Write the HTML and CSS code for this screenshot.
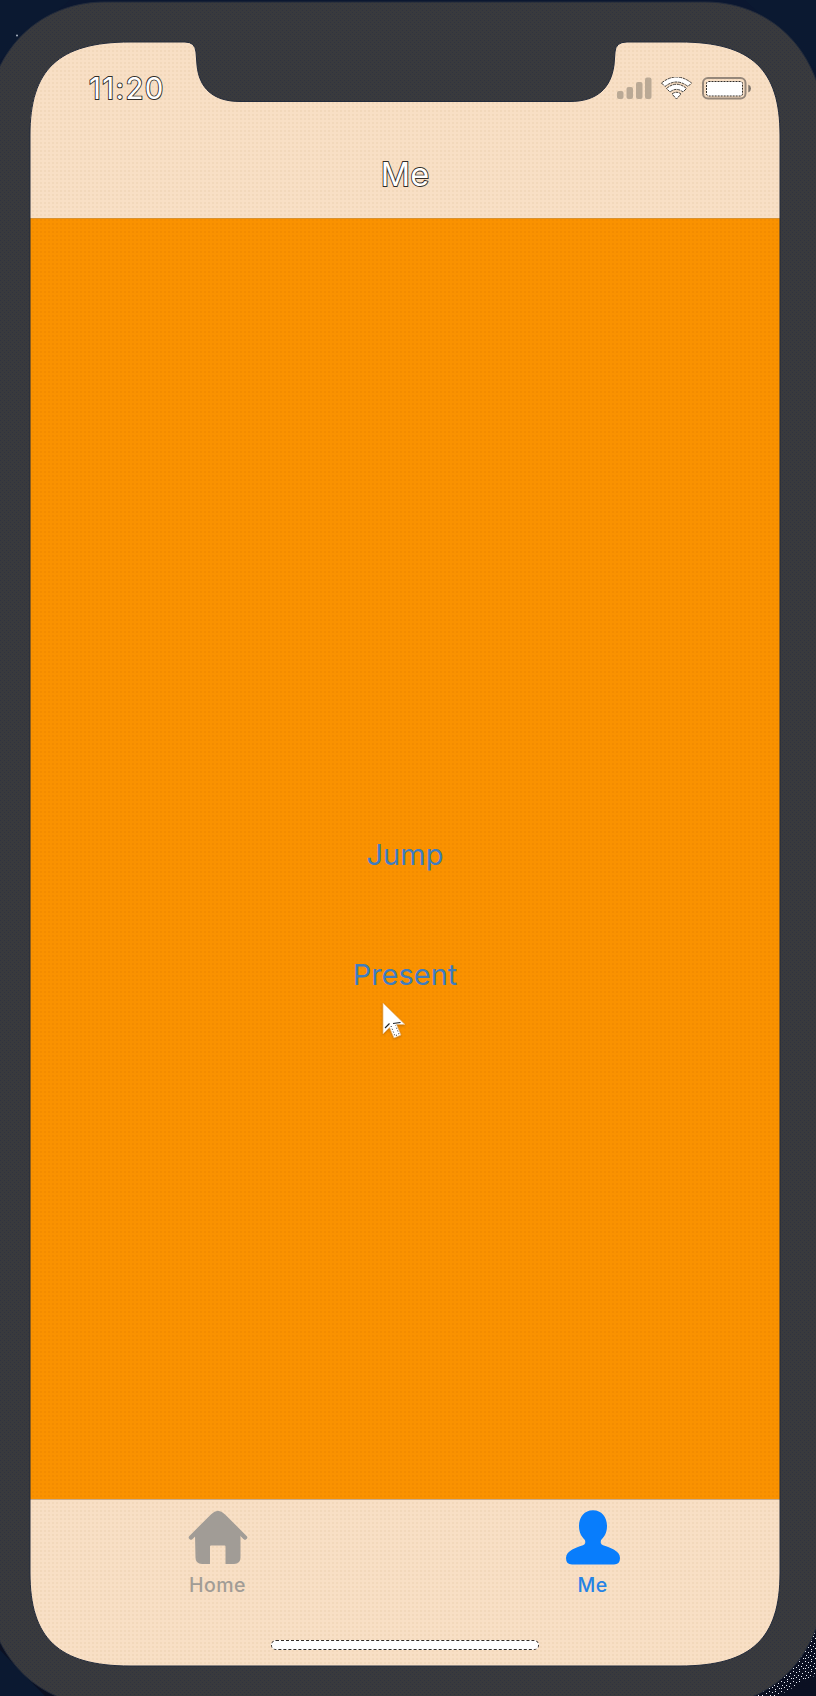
FILE: index.html
```
<!DOCTYPE html>
<html lang="en">
<head>
<meta charset="utf-8">
<title>Me</title>
<link rel="stylesheet" href="styles.css">
</head>
<body>
<main class="device">
  <div class="screen">
    <header class="top">
      <div class="status">
        <span class="time outlined">11:20</span>
        <svg class="indicators" width="134" height="24" viewBox="0 0 134 24">
          <g fill="#baa995">
            <rect x="0" y="14" width="6.5" height="8" rx="2"/>
            <rect x="9.5" y="10" width="6.5" height="12" rx="2"/>
            <rect x="19" y="5" width="6.5" height="17" rx="2"/>
            <rect x="28" y="0.5" width="6.5" height="21.5" rx="2"/>
          </g>
          <g fill="#fff" stroke="#302c28" stroke-width=".9" stroke-dasharray="3 .8" stroke-linejoin="round">
            <path d="M44.500 6Q59.500-6 74.500 6L71 9.500Q59.500 .5 48 9.500Z"/>
            <path d="M49.500 11.500Q59.500 3 69.500 11.500L66 15Q59.500 9.800 53 15Z"/>
            <path d="M55 17Q59.500 13.500 64 17L59.500 22Z"/>
          </g>
          <rect x="86" y="1" width="42.500" height="20.500" rx="5" fill="none" stroke="#95877a" stroke-width="2"/>
          <rect x="89.500" y="4.500" width="36" height="14.500" rx="2" fill="#fff" stroke="#302c28" stroke-dasharray="2 1"/>
          <path d="M131.300 7.500Q134 8.500 134 11.500T131.300 15.500Z" fill="#7d746b"/>
        </svg>
      </div>
      <h1 class="title"><span class="outlined">Me</span></h1>
    </header>
    <section class="content">
      <button class="action">Jump</button>
      <button class="action present">Present</button>
    </section>
    <nav class="tabs">
      <a class="tab">
        <svg width="60" height="54" viewBox="0 0 60 54">
          <path d="M3 27L24.500 5.500Q30 0 35.500 5.500L57 27" fill="none" stroke="#a19c96" stroke-width="4.500" stroke-linecap="round"/>
          <path d="M7 24L26 4Q30 1 34 4L52.500 24V47Q52.500 53.500 46 53.500H37.500V36Q37.500 35 36.500 35H23Q22 35 22 36V53.500H14Q7.500 53.500 7.500 47Z" fill="#a19c96"/>
        </svg>
        <span>Home</span>
      </a>
      <a class="tab active">
        <svg width="56" height="55" viewBox="0 0 56 55">
          <path d="M28 .3C36.500.3 42 7 42 16C42 23 39 27 36.500 29.500Q35.500 30.500 35.800 33Q36 34.500 38 35.300C44 37.500 55 40.500 55 48Q55 54.500 49 54.500H7Q1 54.500 1 48C1 40.500 12 37.500 18 35.300Q20 34.500 20.200 33Q20.500 30.500 19.500 29.500C17 27 14 23 14 16C14 7 19.500.3 28 .3Z" fill="#087dfc"/>
        </svg>
        <span>Me</span>
      </a>
    </nav>
    <div class="home-area"><i class="home-bar"></i></div>
  </div>
  <svg class="bezel" width="816" height="1696" viewBox="0 0 816 1696">
    <defs>
      <pattern id="grain" width="4" height="4" patternUnits="userSpaceOnUse">
        <rect width="4" height="4" fill="#393a3d"/>
        <path d="M0 0h1v1H0zM2 2h1v1H2z" fill="#2f3340"/>
      </pattern>
      <pattern id="stars" width="12" height="10" patternUnits="userSpaceOnUse">
        <path d="M1 1h1v1H1zM4 2h1v1H4zM7 1h1v1H7zM10 3h1v1h-1zM2 5h1v1H2zM6 5h1v1H6zM9 6h1v1H9zM1 8h1v1H1zM4 7h1v1H4zM7 9h1v1H7zM11 8h1v1h-1z" fill="#e9edf5"/>
      </pattern>
      <linearGradient id="sky" x1="0" y1="0" x2="0" y2="1">
        <stop offset="0" stop-color="#0b1730"/><stop offset="1" stop-color="#0b1022"/>
      </linearGradient>
    </defs>
    <path fill="url(#sky)" fill-rule="evenodd" d="M0 0H816V1696H0ZM30 42V1666H780V42Z"/>
    <path fill="#0b1931" d="M0 0H70L0 60ZM816 0H745L816 70ZM0 1650V1696H45Z"/>
    <path fill="url(#stars)" d="M816 1625V1675L778 1696H748L785 1665Z"/>
    <circle cx="17" cy="35.500" r="1" fill="#aeb6c4"/>
    <path fill="url(#grain)" stroke="#232b3b" stroke-width="1" fill-rule="evenodd" d="M-16 140C-16 50 40 2 105 2H705C770 2 826 50 826 140V1568C826 1658 770 1706 705 1706H105C40 1706-16 1658-16 1568ZM30 135V1573C30 1638 58 1666 130 1666H680C752 1666 780 1638 780 1573V135C780 70 752 42 680 42H627Q615.500 42 615 52L614 65C611 88 597 101.500 570 101.500H240C213 101.500 199 88 197 65L196 52Q195 42 185 42H130C58 42 30 70 30 135Z"/>
  </svg>
  <svg class="pointer" width="26" height="40" viewBox="0 0 26 40">
    <path d="M2 2V33L8.500 26.500L13 37L20 34L15.500 23.500H24Z" fill="#fff" stroke="#e7b879" stroke-width=".7"/>
    <path d="M4 27L8.500 22.500M12 22.500L19.500 21.500" fill="none" stroke="#222" stroke-width="1.200"/>
    <path d="M10 25L14 35L18 33L14.500 24.500" fill="none" stroke="#222" stroke-dasharray="1 2"/>
  </svg>
</main>
</body>
</html>
```
FILE: styles.css
```
* { box-sizing: border-box; }

body {
  margin: 0;
  overflow: hidden;
  background: #0b1428;
  font-family: Inter, "Liberation Sans", sans-serif;
}

.device {
  position: relative;
  width: 816px;
  height: 1696px;
  padding: 42px 36px 30px 30px;
}

.screen {
  display: flex;
  flex-direction: column;
  width: 750px;
  height: 1624px;
  background-color: #f8dfc5;
  background-image: conic-gradient(#f2d8bb 25%, transparent 0);
  background-size: 4px 4px;
}

.top {
  height: 176px;
  padding-top: 34px;
}

.status {
  display: flex;
  justify-content: space-between;
  height: 60px;
  padding: 0 29px 0 59px;
}

.time {
  font-size: 29.5px;
  line-height: 25px;
  letter-spacing: 1.3px;
}

.indicators { margin-top: 1px; }

.outlined {
  color: #fff;
  -webkit-text-stroke: 1.8px #302c28;
  paint-order: stroke fill;
}

.title {
  margin: 19px 0 0;
  font-size: 32.5px;
  font-weight: 400;
  line-height: 40px;
  text-align: center;
}

.content {
  display: flex;
  flex: 1;
  flex-direction: column;
  align-items: center;
  gap: 80px;
  padding-top: 616px;
  border-top: 1px solid #d9912e;
  background-color: #fa9200;
  background-image: conic-gradient(#f38c00 25%, transparent 0);
  background-size: 4px 4px;
}

.action {
  padding: 0;
  border: 0;
  background: none;
  color: #3e7dc0;
  font: 29px/40px Inter, "Liberation Sans", sans-serif;
}

.tabs {
  display: flex;
  height: 113px;
  padding-top: 10px;
  border-top: 1px solid #c9ac8c;
}

.tab {
  display: flex;
  flex: 1;
  flex-direction: column;
  align-items: center;
  gap: 7px;
  color: #a19c96;
  font-size: 19.5px;
  font-weight: 500;
  line-height: 26px;
  letter-spacing: .5px;
}

.tab svg { height: 55px; }

.active { color: #2583e6; }

.home-area {
  display: flex;
  justify-content: center;
  height: 54px;
  padding-top: 28px;
}

.home-bar {
  width: 268px;
  height: 10px;
  border: 1px dashed #302c28;
  border-radius: 5px;
  background: #fff;
}

.bezel {
  position: absolute;
  top: 0;
  left: 0;
}

.pointer {
  position: absolute;
  top: 1001px;
  left: 381px;
  filter: drop-shadow(0 1px 1px rgb(120 60 0 / 40%));
}
```
